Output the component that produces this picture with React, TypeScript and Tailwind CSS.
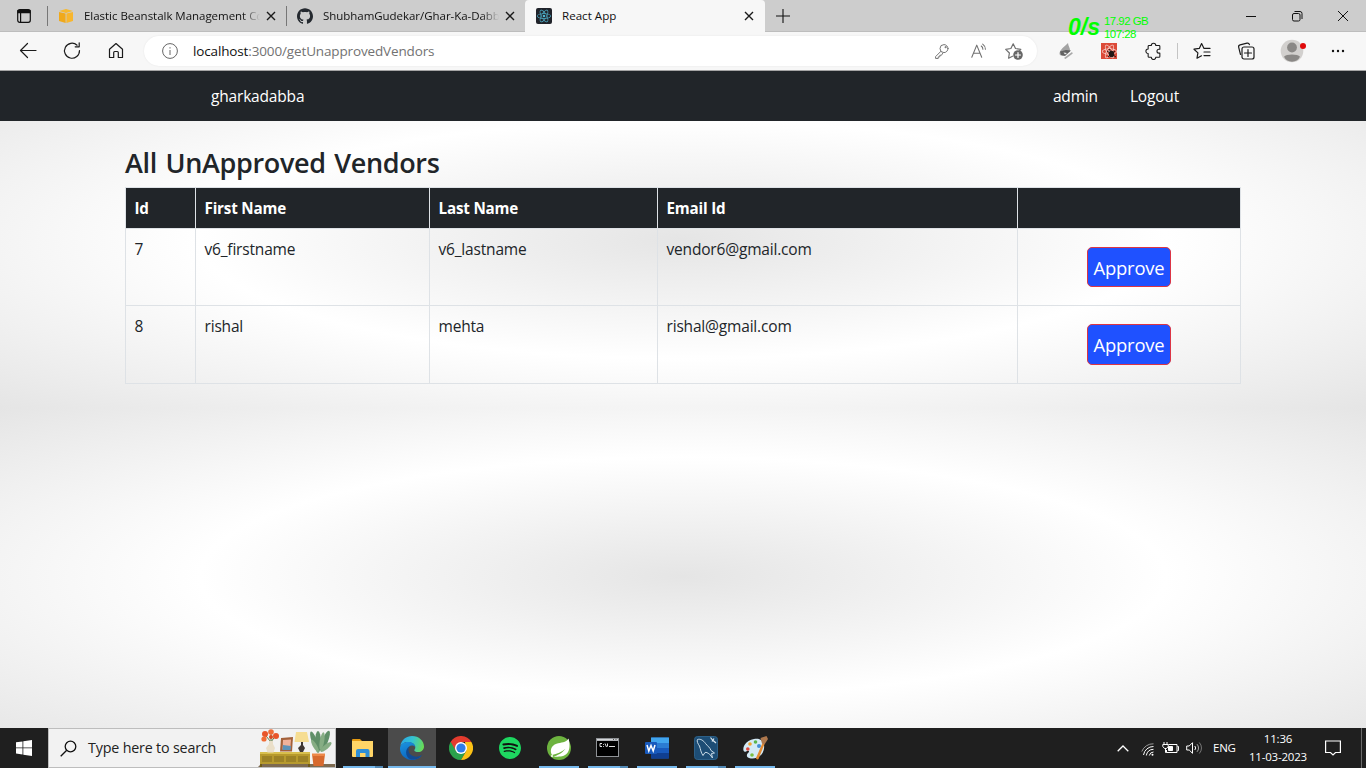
import React from "react";
import { SiGithub, SiReact, SiSpotify } from "react-icons/si";

type P = { children?: React.ReactNode; className?: string };

const Line = ({ children, className = "", size = 20 }: P & { size?: number }) => (
  <svg width={size} height={size} viewBox="0 0 20 20" fill="none" stroke="currentColor" strokeWidth="1.2" strokeLinecap="round" strokeLinejoin="round" className={"shrink-0 " + className}>
    {children}
  </svg>
);

const CloseX = () => (
  <svg width="10" height="10" viewBox="0 0 10 10" stroke="#1a1a1a" strokeWidth="1.4" className="shrink-0">
    <path d="M1 1l8 8M9 1l-8 8" />
  </svg>
);

function TabStrip() {
  return (
    <div className="relative flex h-8 shrink-0 items-center bg-[#cdcdcd] text-[11.500px] text-[#111] shadow-[inset_0_-1px_0_#bdbdbd]">
      <div className="flex w-[47px] justify-center">
        <svg width="14" height="14" viewBox="0 0 14 14" fill="none" stroke="#111" strokeWidth="1.2">
          <rect x="0.7" y="0.7" width="12.6" height="12.6" rx="2" />
          <path d="M1 1.500h12v2.200H1z" fill="#111" />
          <path d="M3.600 4v9" />
        </svg>
      </div>
      <div className="h-5 w-px bg-[#777]" />
      <div className="flex w-[238px] items-center pl-[11px]">
        <svg width="14" height="14" viewBox="0 0 14 14" className="shrink-0">
          <path d="M0 2l7-2 7 2-7 2z" fill="#f7b92e" />
          <path d="M0 3l6.600 1.600V14L0 12z" fill="#f0a91b" />
          <path d="M14 3L7.400 4.600V14L14 12z" fill="#f8b62d" />
        </svg>
        <span className="ml-[11px] w-[176px] whitespace-nowrap text-[11.500px] tracking-[-0.03px] [mask-image:linear-gradient(to_right,#000_90%,transparent_100%)]">Elastic Beanstalk Management Co</span>
        <span className="ml-[6px]"><CloseX /></span>
      </div>
      <div className="h-5 w-px bg-[#777]" />
      <div className="flex w-[238px] items-center pl-[10px]">
        <SiGithub size={16} color="#24292f" className="shrink-0" />
        <span className="ml-[10px] w-[176px] whitespace-nowrap text-[11.500px] tracking-[-0.04px] [mask-image:linear-gradient(to_right,#000_90%,transparent_100%)]">ShubhamGudekar/Ghar-Ka-Dabb</span>
        <span className="ml-[6px]"><CloseX /></span>
      </div>
      <div className="flex h-8 w-[240px] items-center rounded-t-[4px] bg-[#f7f7f7] pl-[11px]">
        <div className="flex h-4 w-4 items-center justify-center rounded-[2px] bg-[#20232a]">
          <SiReact size={14} color="#4fb5d0" />
        </div>
        <span className="ml-[10px] w-[182px] whitespace-nowrap text-[11.600px]">React App</span>
        <CloseX />
      </div>
      <svg width="14" height="14" viewBox="0 0 14 14" stroke="#111" strokeWidth="1.1" className="ml-[11px]"><path d="M7 0v14M0 7h14" /></svg>
      <div className="ml-auto flex items-center text-black">
        <svg width="46" height="12" viewBox="0 0 46 12" stroke="#111" fill="none"><path d="M18 6.500h10" /></svg>
        <svg width="46" height="12" viewBox="0 0 46 12" stroke="#111" fill="none">
          <rect x="18.500" y="3.500" width="7.500" height="7.500" rx="1.500" />
          <path d="M20.500 1.500h5.500a2 2 0 0 1 2 2v5.500" />
        </svg>
        <svg width="46" height="12" viewBox="0 0 46 12" stroke="#111" fill="none"><path d="M18 1l10 10M28 1L18 11" /></svg>
      </div>
      <div className="absolute left-[1068px] top-[15px] z-10 flex font-['Liberation_Sans',sans-serif] text-[#00ff00]">
        <span className="w-9 text-[23px] font-bold italic leading-6">0/s</span>
        <span className="whitespace-pre text-[11.500px] leading-[13px] tracking-[-0.55px]">{"17.92 GB\n107:28"}</span>
      </div>
    </div>
  );
}

const Cell = ({ children, className = "w-11" }: P) => <div className={"flex shrink-0 items-center justify-center " + className}>{children}</div>;

function Toolbar() {
  return (
    <div className="flex h-[39px] shrink-0 items-center border-b border-[#a5a5a5] bg-[#f7f7f7] pl-[6px] text-[#1b1b1b]">
      <Cell><Line><path d="M18 9.500H2.500M9.500 2.500l-7 7 7 7" /></Line></Cell>
      <Cell><Line><path d="M17.500 9.500a7.500 7.500 0 1 1-2.400-5.300M17.200 1.800v4h-4" /></Line></Cell>
      <Cell><Line><path d="M3.500 8.200L10 2.500l6.500 5.700v8.300h-4.200v-5a1 1 0 0 0-1-1H8.700a1 1 0 0 0-1 1v5H3.500z" /></Line></Cell>
      <div className="ml-[6px] flex h-[30px] w-[893px] items-center rounded-full bg-white pl-[18px] shadow-[0_0_2px_rgba(0,0,0,0.08)]">
        <svg width="16" height="16" viewBox="0 0 16 16" fill="none" stroke="#666" className="shrink-0">
          <circle cx="8" cy="8" r="7.400" /><path d="M8 7v5M8 4.200v1.300" />
        </svg>
        <span className="ml-[15px] whitespace-nowrap pt-px text-[13.500px] tracking-[-0.14px] text-[#727272]"><span className="text-[#111]">localhost</span>:3000/getUnapprovedVendors</span>
        <div className="ml-auto flex items-center pr-[5px] text-[#707070]">
          <Cell className="w-9">
            <Line size={16}><circle cx="12.500" cy="7" r="5" /><circle cx="14.300" cy="5.200" r="0.700" /><path d="M8.500 10.500L2 17v2.300h3.300v-2h2v-2h2l1.700-2.600" /></Line>
          </Cell>
          <Cell className="w-9">
            <Line size={18} className="ml-px"><path d="M2 17L7.500 3.500 13 17M3.900 12.500h7.200M12.500 4.500a4 4 0 0 1 1.800 3.500M14.100 2.300a7 7 0 0 1 3 5.700" /></Line>
          </Cell>
          <Cell className="w-9">
            <Line><path d="M8.500 15.200L4.600 17.200l.8-5.200L1.700 8.300l5.200-.8 2.300-4.700 2.300 4.700 5.300.8-1.100 1.200" /><circle cx="14" cy="14" r="4.800" fill="#666" stroke="none" /><path d="M14 11.500v5M11.500 14h5" stroke="#fff" /></Line>
          </Cell>
        </div>
      </div>
      <Cell className="ml-[7px] w-11">
        <svg width="16" height="16" viewBox="0 0 16 16">
          <path d="M10 0C7 3 1.500 7 1.500 10.500c0 2 2 2.500 4.500 2L12 8C12.500 5 10 3 10 0z" fill="#a3a3a3" />
          <path d="M2 8.500L8 7l5 .5-6 5.500L3 12z" fill="#626262" /><path d="M6 15l8-6 .8 1.500L7.500 16z" fill="#a8a8a8" />
          <path d="M5.500 9.500l3.500.5-2 1.500z" fill="#eee" />
        </svg>
      </Cell>
      <Cell className="-ml-px w-11">
        <div className="relative flex h-4 w-4 items-center justify-center bg-[#dc4a38]">
          <SiReact size={15} color="#f6d4cf" />
          <svg className="absolute left-[6px] top-[6px]" width="9" height="9" viewBox="0 0 9 9"><ellipse cx="4.500" cy="5" rx="2.700" ry="3.200" fill="#241816" /><path d="M0 2l9 6M1 8l7-6M2 0l2 3" stroke="#241816" /></svg>
        </div>
      </Cell>
      <Cell>
        <Line size={18} className="ml-[2px]"><path d="M7 3.800a2.500 2.500 0 0 1 5 0h3.500a1 1 0 0 1 1 1v3.200h-1a2.200 2.200 0 0 0 0 4.400h1V16a1 1 0 0 1-1 1H12a2.500 2.500 0 0 1-5 0H4.500a1 1 0 0 1-1-1v-3.200a2.500 2.500 0 0 1 0-5V4.800a1 1 0 0 1 1-1z" /></Line>
      </Cell>
      <div className="mx-[2px] h-4 w-px bg-[#c4c4c4]" />
      <Cell><Line><path d="M9.500 14.800l-4.500 2.400.9-5.300L2 8.200l5.300-.8L9.600 2.600 12 7.400h6M12 11h6M12 14.600h6" /></Line></Cell>
      <Cell>
        <Line><path d="M4.500 13.500l-1.800-7.200a2 2 0 0 1 1.400-2.400L11 2.200a2 2 0 0 1 2.400 1.400M8 6h8a2 2 0 0 1 2 2v8a2 2 0 0 1-2 2H8a2 2 0 0 1-2-2V8a2 2 0 0 1 2-2zM12 8.500v7M8.500 12h7" /></Line>
      </Cell>
      <Cell className="w-12">
        <svg width="28" height="24" viewBox="0 0 28 24" className="ml-[2px]">
          <circle cx="13" cy="12" r="11.300" fill="#d2d0ce" />
          <circle cx="13" cy="8.500" r="4.900" fill="#8a8886" />
          <path d="M5 17.800c2-3 14-3 16 0-3 6.500-13 6.500-16 0z" fill="#8a8886" />
          <circle cx="24" cy="7" r="3" fill="#e00b0b" />
        </svg>
      </Cell>
      <Cell><svg width="14" height="4" viewBox="0 0 14 4" fill="#111"><circle cx="2" cy="2" r="1.200" /><circle cx="7" cy="2" r="1.200" /><circle cx="12" cy="2" r="1.200" /></svg></Cell>
    </div>
  );
}

const vendors = [
  { id: 7, first: "v6_firstname", last: "v6_lastname", email: "vendor6@gmail.com", h: "h-[77px]", button: "h-10 pt-[2px]" },
  { id: 8, first: "rishal", last: "mehta", email: "rishal@gmail.com", h: "h-[78px]", button: "h-[41px] pb-px pt-[2px]" },
];

function Page() {
  const cell = "border border-[#dee2e6] pl-[8.500px] pr-2 pt-2 align-top leading-6";
  return (
    <main className="flex min-h-0 flex-1 flex-col bg-[radial-gradient(ellipse_farthest-corner_at_center,#e5e5e5_0%,#ffffff_50%,#e5e5e5_100%)] bg-[length:100%_337px] text-[15.500px] tracking-[-0.18px] text-[#212529]">
      <nav className="flex h-[50px] shrink-0 items-center bg-[#212529] pl-[211px] pr-[187px] pt-px text-white">
        <span>gharkadabba</span>
        <span className="ml-auto mr-8">admin</span>
        <span>Logout</span>
      </nav>
      <section className="ml-[125px] w-[1116px] pt-[25px]">
        <h3 className="mb-[7px] text-[27px] font-semibold leading-[34px] tracking-[-0.35px] [word-spacing:2px]">All UnApproved Vendors</h3>
        <table className="w-[1116px] table-fixed border-collapse">
          <colgroup>
            <col className="w-[70px]" /><col className="w-[234px]" /><col className="w-[228px]" /><col className="w-[360px]" /><col className="w-[223px]" />
          </colgroup>
          <thead>
            <tr className="h-[41px] bg-[#212529] text-left text-[15.200px] text-white">
              {["Id", "First Name", "Last Name", "Email Id", ""].map((h, i) => (
                <th key={i} className="border border-[#dee2e6] pb-0 pl-[8.500px] pr-2 pt-px font-bold">{h}</th>
              ))}
            </tr>
          </thead>
          <tbody>
            {vendors.map((v) => (
              <tr key={v.id} className={v.h}>
                <td className={cell}>{v.id}</td>
                <td className={cell}>{v.first}</td>
                <td className={cell}>{v.last}</td>
                <td className={cell}>{v.email}</td>
                <td className="border border-[#dee2e6] p-0 pt-[18px] align-top">
                  <button className={"mx-auto flex w-[84px] items-center justify-center rounded-[5px] border border-[#dc3545] bg-[#1f51ff] text-[18.400px] leading-8 text-white " + v.button}>Approve</button>
                </td>
              </tr>
            ))}
          </tbody>
        </table>
      </section>
    </main>
  );
}

function SearchScene() {
  return (
    <svg width="78" height="38" viewBox="0 0 78 38">
      <path d="M0 38l3-3h74v3z" fill="#7d6a50" />
      <path d="M2 23h50v12H2z" fill="#b79a2d" /><path d="M2 23h50v2H2z" fill="#d8bf4d" />
      <path d="M4 27h10v6H4zM16 27h10v6H16zM28 27h10v6H28zM40 27h10v6H40z" fill="#9c8226" />
      <path d="M2 35h2v3H2zM50 35h2v3h-2z" fill="#6f5a17" />
      <path d="M13 13L8 7M13 13V4M13 13l5-7" stroke="#5f7d4c" />
      <circle cx="7" cy="5" r="3" fill="#e8552a" /><circle cx="13" cy="3" r="2.800" fill="#f06c36" /><circle cx="18" cy="7" r="3" fill="#e8552a" /><circle cx="6" cy="10" r="2.600" fill="#f06c36" /><circle cx="13" cy="8" r="2" fill="#d94a20" />
      <path d="M11 12h4v3l2 4-1.500 4.500h-6L8 19l3-4z" fill="#eadfc9" />
      <path d="M23 9l12-1-1 14.500H22z" fill="#a3613a" /><path d="M25 11l8-.5-.8 10H24.500z" fill="#f1b29b" /><path d="M25 16l8 1-.5 4h-8z" fill="#5e92b8" />
      <path d="M38 3h11l2 10H36.500z" fill="#f6dd92" /><path d="M43 13h2v3l2 3-2 4h-3l-2-4 3-3z" fill="#3f3733" />
      <g fill="#5f8f68"><ellipse cx="60" cy="13" rx="3" ry="11" /><ellipse cx="56" cy="11" rx="2.600" ry="9" transform="rotate(-20 56 11)" /><ellipse cx="67" cy="12" rx="3" ry="11" transform="rotate(22 67 12)" /></g>
      <g fill="#86ad84"><ellipse cx="64" cy="12" rx="2.200" ry="9" transform="rotate(10 64 12)" /><ellipse cx="68" cy="18" rx="2.400" ry="7" transform="rotate(50 68 18)" /><ellipse cx="57" cy="17" rx="2" ry="7" transform="rotate(-30 57 17)" /></g>
      <path d="M54 25h13l-1.500 12h-10z" fill="#d7692e" /><path d="M54 24.500h13V27H54z" fill="#ed8748" />
    </svg>
  );
}

const apps: { icon: React.ReactNode; bar: "none" | "one" | "multi" | "full" }[] = [
  {
    bar: "multi",
    icon: (
      <svg width="22" height="20" viewBox="0 0 22 20"><path d="M0 2a1 1 0 0 1 1-1h7l2 2H0z" fill="#e69b12" /><path d="M0 3h21v15a1 1 0 0 1-1 1H1a1 1 0 0 1-1-1z" fill="#ffd567" /><path d="M4 19v-6a2 2 0 0 1 2-2h9.500a2 2 0 0 1 2 2v6h-4v-4H8v4z" fill="#2e8fd8" /></svg>
    ),
  },
  {
    bar: "full",
    icon: (
      <svg width="24" height="24" viewBox="0 0 24 24">
        <defs>
          <linearGradient id="eTop" x1="0" y1="0.300" x2="1" y2="0.500"><stop offset="0" stopColor="#2aa8e8" /><stop offset="0.500" stopColor="#35c3d0" /><stop offset="1" stopColor="#68dc55" /></linearGradient>
          <linearGradient id="eLow" x1="0" y1="0" x2="0.500" y2="1"><stop offset="0" stopColor="#1b95e0" /><stop offset="1" stopColor="#0c62bd" /></linearGradient>
        </defs>
        <path d="M.3 10C1.500 3.500 6.500 0 12 0c7 0 12 5 12 10.500 0 3.500-2.700 5.500-5.700 5.500-2.500 0-4-.9-4-1.800 0-.6 1-1.100 1-2.900C15.300 8.500 12 6 8 6 4.500 6 1.500 7.800.3 10z" fill="url(#eTop)" />
        <path d="M0 12C.5 8 4 6 8 6c4 0 7 2 7.200 4.800-1-1-2.200-1.300-3.200-1.300-2.500 0-4 2-4 4.500 0 5 5 8 10 7l3.500-1.500C19.500 22.300 16 24 12 24 5.300 24-.3 18.500 0 12z" fill="url(#eLow)" />
        <path d="M9.500 10.500C7 14 9 19.500 14.500 20.500c3 .5 5.500-.3 7.700-1.800-2.500 3.800-7 5.500-11 4.700C5 21.500 4.500 13 9.500 10.500z" fill="#124a91" />
      </svg>
    ),
  },
  {
    bar: "none",
    icon: (
      <svg width="24" height="24" viewBox="0 0 24 24">
        <path d="M1.600 6a12 12 0 0 1 20.800 0H12z" fill="#e33b2e" /><path d="M1.600 6A12 12 0 0 0 12 24l5.200-9L12 12H6.800z" fill="#2ba24c" /><path d="M22.400 6A12 12 0 0 1 12 24l5.200-9L16 6z" fill="#fbc116" /><path d="M1.600 6l5.200 9L12 12V6z" fill="#e33b2e" />
        <path d="M1.600 6l5.200 9 2 2.200L5 19A12 12 0 0 1 1.600 6z" fill="#2ba24c" /><circle cx="12" cy="12" r="6" fill="#fff" /><circle cx="12" cy="12" r="4.600" fill="#2f7de9" />
      </svg>
    ),
  },
  { bar: "none", icon: <div className="flex h-[22px] w-[22px] items-center justify-center rounded-full bg-[#111]"><SiSpotify size={22} color="#1ed760" /></div> },
  {
    bar: "one",
    icon: (
      <svg width="24" height="24" viewBox="0 0 24 24"><circle cx="12" cy="12" r="12" fill="#6db33f" /><path d="M21.500 2.500c2 7 2 17-8 18-3.500.4-6-.3-8.500.7 6-2 10-4 13.500-8.500C14.500 16 10 17.800 5 19c-2.500-4-1-9.500 4.500-11.300C14 6.300 19 7 21.500 2.500z" fill="#fff" /><circle cx="5" cy="20" r="1" fill="#fff" /></svg>
    ),
  },
  {
    bar: "multi",
    icon: (
      <svg width="23" height="19" viewBox="0 0 23 19" className="-ml-px -mt-[2px]"><rect width="23" height="19" fill="#8f9296" /><path d="M1 1h21v1.500H1z" fill="#d5d7da" /><path d="M17 1.500h1M19.500 1.500h1" stroke="#555" /><path d="M1 3h21v15H1z" fill="#000" /><path d="M6 5.500H4v3h2M7.500 6v.8M7.500 8v.8M9 5.500l1.500 3.500M11.500 5.500v3M13 8.500h6" stroke="#ddd" fill="none" /></svg>
    ),
  },
  {
    bar: "one",
    icon: (
      <svg width="24" height="22" viewBox="0 0 24 22" className="-mt-px"><rect x="6" y="0.500" width="18" height="21" rx="1" fill="#185abd" /><path d="M6 .5h18v5.500H6z" fill="#41a5ee" /><path d="M6 6h18v5H6z" fill="#2b7cd3" /><path d="M6 16h18v5.500H6z" fill="#103f91" /><rect y="5" width="12" height="12" rx="1" fill="#185abd" /><path d="M2 8l1.800 6L6 8.500 8.200 14 10 8" stroke="#fff" strokeWidth="1.500" fill="none" /></svg>
    ),
  },
  {
    bar: "multi",
    icon: (
      <svg width="24" height="24" viewBox="0 0 24 24"><rect x="0.500" y="0.500" width="23" height="23" rx="3" fill="#1d4d75" stroke="#2c6088" /><path d="M3.500 3.500c3-1 6 1 8 4 2 2.500 4.500 4 5.500 7l3.500 2.500-3 .5 1 4.500-3-4c-2-1-3-2-4.500-1.500L9 19.500C7 17 6.500 13 5.500 10 4 8 2.500 5 3.500 3.500z" fill="none" stroke="#c9dae6" strokeWidth="1" /><path d="M16.500 1.500l2 2.500 3.500 3M18 5.500l2-3" stroke="#dce9f1" strokeWidth="1.200" /></svg>
    ),
  },
  {
    bar: "one",
    icon: (
      <svg width="25" height="24" viewBox="0 0 25 24"><path d="M11 3c7-1.500 11 3 10 9.500C20 20 13 24 6 22c-3-1-2.500-4-.5-5.500C7 15 5 14 3 15.500 0 17-.5 12 1.500 9 3.500 5.500 7 3.500 11 3z" fill="#d4eaf6" /><circle cx="4.800" cy="13" r="1.800" fill="#e0463a" /><circle cx="7" cy="8" r="1.800" fill="#f1a32d" /><circle cx="12.500" cy="6" r="1.800" fill="#5bb54b" /><circle cx="16" cy="10" r="2" fill="#438ed7" /><circle cx="9" cy="19" r="1.800" fill="#7abf43" /><path d="M19.500 7l2 1-6 15c-1 1-2.500 0-2.500-1z" fill="#e38a31" /><path d="M17.500 2l6-2L25 3l-3.500 5.500-2.500-1z" fill="#ae784d" /></svg>
    ),
  },
];

function Taskbar() {
  return (
    <footer className="flex h-10 shrink-0 bg-[#1f1f1f] text-white">
      <div className="flex w-12 items-center justify-center">
        <svg width="16" height="16" viewBox="0 0 16 16" fill="#fff"><path d="M0 2.300L6.500 1.400v6.100H0zM7.300 1.300L16 0v7.500H7.300zM0 8.300h6.500v6.200L0 13.600zM7.300 8.300H16V16l-8.700-1.300z" /></svg>
      </div>
      <div className="flex h-10 w-72 items-center border border-[#bdbdbd] bg-[#f2f2f2] pl-[11px] text-[#222]">
        <svg width="17" height="17" viewBox="0 0 17 17" fill="none" stroke="#111" strokeWidth="1.300"><circle cx="10.500" cy="6.500" r="5.300" /><path d="M6.700 10.300L.7 16.300" /></svg>
        <span className="ml-[11px] whitespace-nowrap text-[14.300px] tracking-[-0.18px]">Type here to search</span>
        <div className="-mr-px ml-auto"><SearchScene /></div>
      </div>
      <div className="ml-[3px] flex gap-px">
        {apps.map((a, i) => (
          <div key={i} className={"flex w-12 flex-col items-center " + (a.bar === "full" ? "bg-[#4b4b4b]" : "")}>
            <div className="flex h-[38px] items-center pt-[2px]">{a.icon}</div>
            {a.bar === "full" && <div className="h-[2px] w-12 bg-[#76b9ed]" />}
            {a.bar === "one" && <div className="h-[2px] w-10 bg-[#76b9ed]" />}
            {a.bar === "multi" && <div className="flex h-[2px] w-10"><div className="w-8 bg-[#76b9ed]" /><div className="w-2 bg-[#5289b5]" /></div>}
          </div>
        ))}
      </div>
      <div className="ml-auto flex items-center text-[11.500px]">
        <svg width="12" height="7" viewBox="0 0 12 7" fill="none" stroke="#fff" strokeWidth="1.300" className="mr-3"><path d="M.7 6.300L6 1l5.300 5.300" /></svg>
        <svg width="13" height="13" viewBox="0 0 13 13" fill="none" stroke="#fff" className="mr-2 mt-[2px]">
          <path d="M.8 8.500A12 12 0 0 1 12.500.8" stroke="#999" /><path d="M2.500 12A10 10 0 0 1 12.500 3.500M5.300 12.500A7.500 7.500 0 0 1 12.500 6.300M8.300 12.500A4.500 4.500 0 0 1 12.500 9" /><circle cx="11.500" cy="11.800" r="1" fill="#fff" stroke="none" />
        </svg>
        <svg width="17" height="12" viewBox="0 0 17 12" fill="none" stroke="#fff" className="mr-[7px]">
          <path d="M6.500 2.500h8.500v8H4.500V8M15.500 4.500h1v4h-1" /><path d="M6.500 4.500h4v4h-4z" fill="#fff" /><path d="M2 0v2M5 0v2M.8 2.500h5.400v2L4.500 6.500h-2L.8 4.500zM3.500 6.500v4h1" />
        </svg>
        <svg width="17" height="14" viewBox="0 0 17 14" fill="none" stroke="#fff" className="mr-[10px]">
          <path d="M.7 5h2.500L6.500 1.700v10.600L3.200 9H.7z" /><path d="M8.800 5a3 3 0 0 1 0 4" /><path d="M11 3.200a5.500 5.500 0 0 1 0 7.600" stroke="#aaa" /><path d="M13.300 1.500a8 8 0 0 1 0 11" stroke="#777" />
        </svg>
        <span className="w-[23px] whitespace-nowrap tracking-[-0.25px]">ENG</span>
        <div className="ml-[12px] flex w-[60px] flex-col items-center whitespace-nowrap leading-[18px] tracking-[-0.2px]">
          <span>11:36</span><span>11-03-2023</span>
        </div>
        <svg width="16" height="16" viewBox="0 0 16 16" fill="none" stroke="#fff" strokeWidth="1.200" className="ml-[17px]"><path d="M.6 1h14.800v11.500H10.500L8 15l-2.500-2.500H.6z" /></svg>
        <div className="ml-5 mr-1 h-10 w-px bg-[#6a6a6a]" />
      </div>
    </footer>
  );
}

export default function App() {
  return (
    <div className="flex h-[768px] w-[1366px] flex-col overflow-hidden font-['Open_Sans','Noto_Sans',sans-serif]">
      <TabStrip />
      <Toolbar />
      <Page />
      <Taskbar />
    </div>
  );
}
